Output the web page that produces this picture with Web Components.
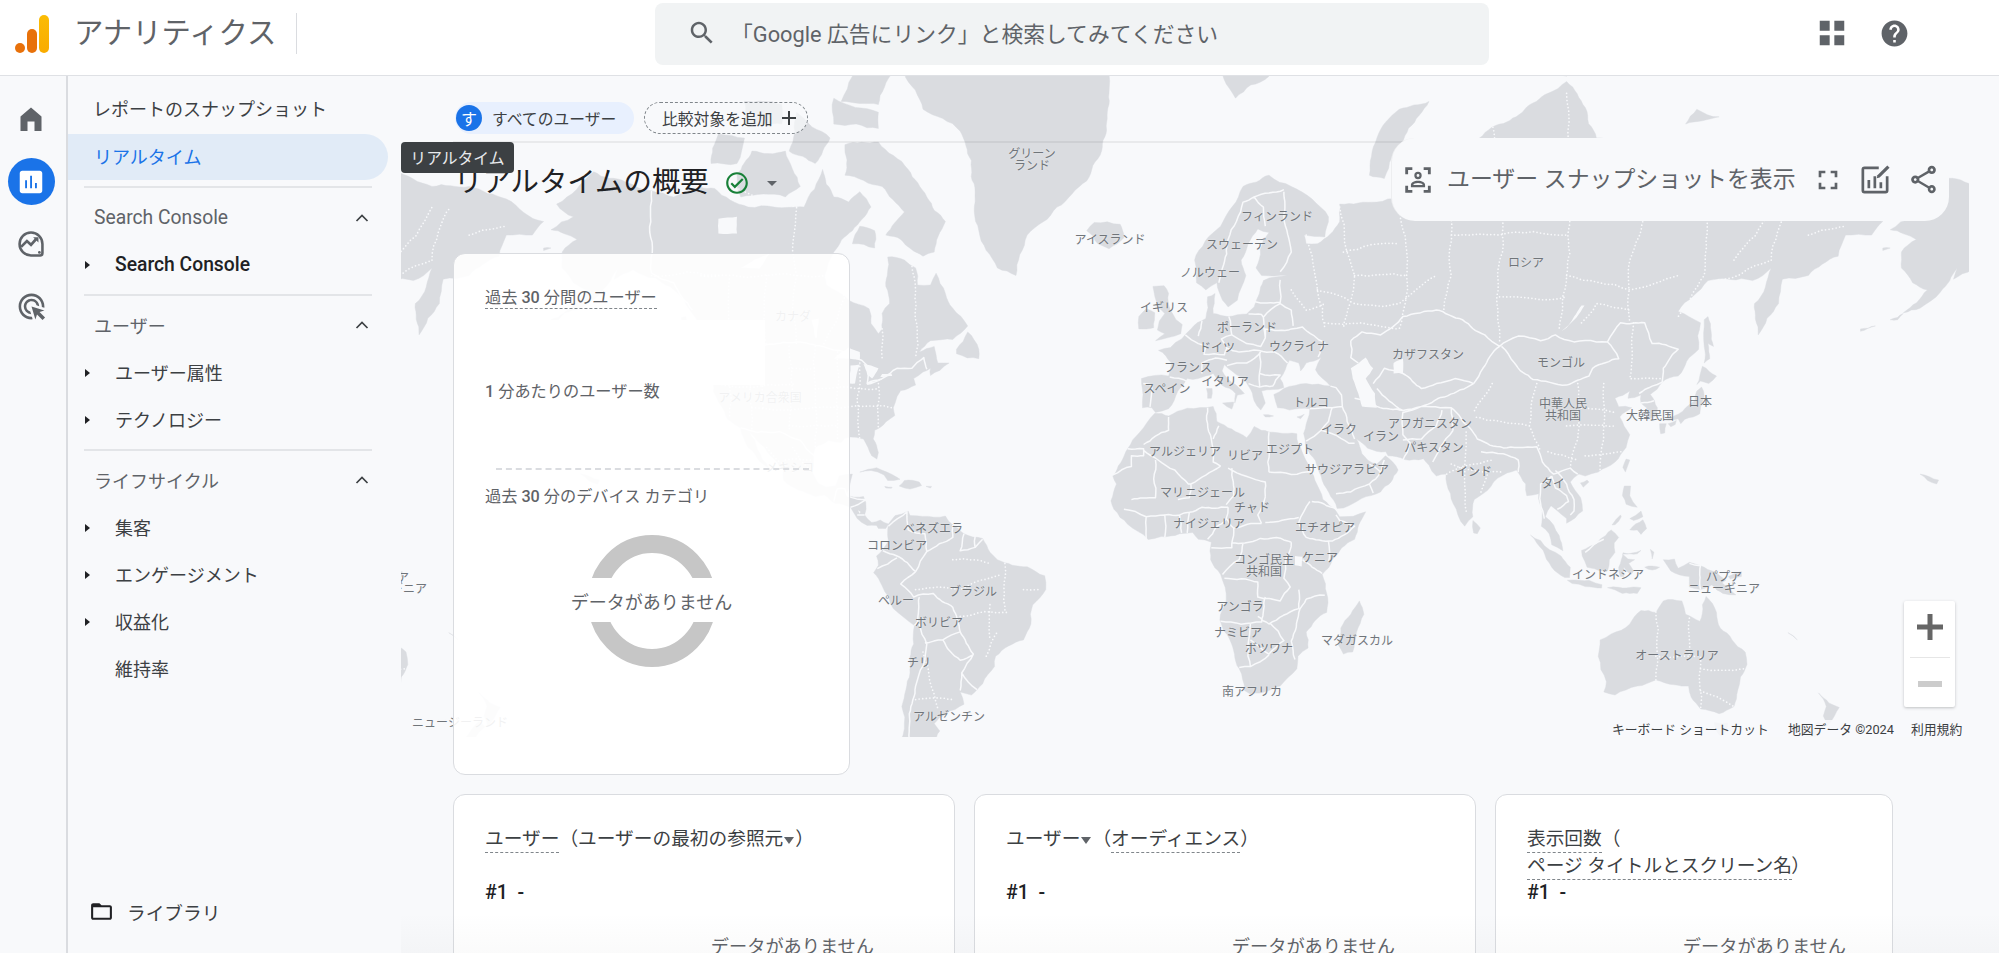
<!DOCTYPE html>
<html lang="ja"><head><meta charset="utf-8"><title>アナリティクス</title>
<style>
html,body{margin:0;height:953px;overflow:hidden;background:#f8f9fb;font-family:Roboto,"Noto Sans CJK JP",sans-serif;color:#3c4043}
</style></head><body>
<ga-app>
  <ga-header slot="header"></ga-header>
  <ga-rail slot="rail"></ga-rail>
  <ga-nav slot="nav"></ga-nav>
  <ga-main slot="main"></ga-main>
</ga-app>
<script>
const IC={
home:'<path d="M12 1.5L22.5 10.5V25H15.5V15.5H8.5V25H1.5V10.5z"/>',
report:'<path d="M19 3H5c-1.1 0-2 .9-2 2v14c0 1.1.9 2 2 2h14c1.1 0 2-.9 2-2V5c0-1.1-.9-2-2-2zM8.8 17H7.3v-6.5h1.5V17zm4 0h-1.5V7h1.5v10zm3.9 0h-1.5v-4.2h1.5V17z"/>',
ads:'<path d="M11.71 17.99A5.993 5.993 0 0 1 6 12c0-3.31 2.69-6 6-6 3.22 0 5.84 2.53 5.99 5.71l-2.1-.63A3.999 3.999 0 0 0 12 8c-2.21 0-4 1.79-4 4 0 1.89 1.31 3.47 3.08 3.89l.63 2.1zM22 12c0 .3-.01.6-.04.9l-1.97-.59c.01-.1.01-.21.01-.31 0-4.42-3.58-8-8-8s-8 3.58-8 8 3.58 8 8 8c.1 0 .21 0 .31-.01l.59 1.97c-.3.03-.6.04-.9.04-5.52 0-10-4.48-10-10S6.48 2 12 2s10 4.48 10 10zm-3.77 4.26L22 15l-10-3 3 10 1.26-3.77 4.27 4.27 1.98-1.98-4.28-4.26z"/>',
insight:'<path d="M12 2.2a9.8 9.8 0 0 1 9.8 9.8v7.8a2 2 0 0 1-2 2H12A9.8 9.8 0 0 1 12 2.2z" fill="none" stroke="currentColor" stroke-width="2.2"/><path d="M3.5 14.5l5-5 3.5 3.2 4.6-5.2" fill="none" stroke="currentColor" stroke-width="2.3"/><path d="M13.8 6.2h4.6v4.6z"/><circle cx="19.2" cy="19.2" r="1.2"/>',
search:'<path d="M15.5 14h-.79l-.28-.27C15.41 12.59 16 11.11 16 9.5 16 5.91 13.09 3 9.5 3S3 5.91 3 9.5 5.91 16 9.5 16c1.61 0 3.09-.59 4.23-1.57l.27.28v.79l5 4.99L20.49 19l-4.99-5zm-6 0C7.01 14 5 11.99 5 9.5S7.01 5 9.5 5 14 7.01 14 9.5 11.99 14 9.5 14z"/>',
apps:'<path d="M1.5 1.5h8.5V10H1.5zM14 1.5h8.5V10H14zM1.5 14h8.5v8.5H1.5zM14 14h8.5v8.5H14z"/>',
help:'<path d="M12 2C6.48 2 2 6.48 2 12s4.48 10 10 10 10-4.48 10-10S17.52 2 12 2zm1 17h-2v-2h2v2zm2.07-7.75l-.9.92C13.45 12.9 13 13.5 13 15h-2v-.5c0-1.1.45-2.1 1.17-2.83l1.24-1.26c.37-.36.59-.86.59-1.41 0-1.1-.9-2-2-2s-2 .9-2 2H8c0-2.21 1.79-4 4-4s4 1.79 4 4c0 .88-.36 1.68-.93 2.25z"/>',
share:'<path d="M18 16.08c-.76 0-1.44.3-1.96.77L8.91 12.7c.05-.23.09-.46.09-.7s-.04-.47-.09-.7l7.05-4.11c.54.5 1.25.81 2.04.81 1.66 0 3-1.34 3-3s-1.34-3-3-3-3 1.34-3 3c0 .24.04.47.09.7L8.04 9.81C7.5 9.31 6.79 9 6 9c-1.66 0-3 1.34-3 3s1.34 3 3 3c.79 0 1.5-.31 2.04-.81l7.12 4.16c-.05.21-.08.43-.08.65 0 1.61 1.31 2.92 2.92 2.92 1.61 0 2.92-1.31 2.92-2.92s-1.31-2.92-2.92-2.92zM18 4c.55 0 1 .45 1 1s-.45 1-1 1-1-.45-1-1 .45-1 1-1zM6 13c-.55 0-1-.45-1-1s.45-1 1-1 1 .45 1 1-.45 1-1 1zm12 7.02c-.55 0-1-.45-1-1s.45-1 1-1 1 .45 1 1-.45 1-1 1z"/>',
full:'<path d="M7 14H5v5h5v-2H7v-3zm-2-4h2V7h3V5H5v5zm12 7h-3v2h5v-5h-2v3zM14 5v2h3v3h2V5h-5z"/>',
check:'<path d="M12 2C6.48 2 2 6.48 2 12s4.48 10 10 10 10-4.48 10-10S17.52 2 12 2zm0 18c-4.41 0-8-3.59-8-8s3.59-8 8-8 8 3.59 8 8-3.59 8-8 8zm4.59-12.42L10 14.17l-2.59-2.58L6 13l4 4 8-8z"/>',
folder:'<path d="M20 6h-8l-2-2H4c-1.1 0-1.99.9-1.99 2L2 18c0 1.1.9 2 2 2h16c1.1 0 2-.9 2-2V8c0-1.1-.9-2-2-2zm0 12H4V8h16v10z"/>',
plus:'<path d="M19 13h-6v6h-2v-6H5v-2h6V5h2v6h6v2z"/>',
chart:'<path d="M14.5 3H5a2 2 0 0 0-2 2v14a2 2 0 0 0 2 2h14a2 2 0 0 0 2-2V9.5h-1.8V19.2H4.8V4.8h9.7z"/><path d="M7 12h1.8v5.5H7zM11 9.5h1.8v8H11zM15 13.5h1.8v4H15z"/><path d="M13.6 8.9l6.6-6.6 1.5 1.5-6.6 6.6-1.9.4z"/>',
snap:'<path d="M3 3h5v2H5v3H3zM16 3h5v5h-2V5h-3zM3 16h2v3h3v2H3zM19 16h2v5h-5v-2h3z"/><path d="M12 6.2a2.6 2.6 0 1 1 0 5.2 2.6 2.6 0 0 1 0-5.2zm0 1.6a1 1 0 1 0 0 2 1 1 0 0 0 0-2zM12 12.6c2.8 0 5 1.2 5 3v1.6H7v-1.6c0-1.8 2.2-3 5-3zm0 1.6c-1.8 0-3.2.6-3.4 1.4h6.8c-.2-.8-1.6-1.4-3.4-1.4z"/>'
};
const svg=(n,s,c='currentColor',h)=>`<svg viewBox="0 0 24 24" width="${s}" height="${h||s}" fill="${c}" aria-hidden="true">${IC[n]}</svg>`;
function def(name,css,html,setup){
  customElements.define(name,class extends HTMLElement{
    constructor(){super();const r=this.attachShadow({mode:'open'});
      const t=document.createElement('template');
      t.innerHTML=`<style>${css}</style>${typeof html==='function'?html(this):html}`;
      r.appendChild(t.content.cloneNode(true));if(setup)setup(r,this);}
  });
}
def('ga-app',`:host{display:grid;grid-template-columns:68px 333px 1fr;grid-template-rows:76px 877px;width:1999px;height:953px;overflow:hidden}
 ::slotted([slot=header]){grid-column:1/4}`,`<slot name="header"></slot><slot name="rail"></slot><slot name="nav"></slot><slot name="main"></slot>`);

def('ga-header',`:host{display:flex;align-items:flex-start;background:#fff;border-bottom:1px solid #dfe1e5;box-sizing:border-box;height:76px;padding:0 0 0 15px;position:relative}
 .logo{display:flex;align-items:flex-end;gap:2px;height:38px;margin-top:15px}
 .logo i{display:block;width:10px;border-radius:5px}
 .t{font-size:29.4px;color:#5f6368;margin-left:25px;margin-top:13px;line-height:40px;white-space:nowrap;width:222px;border-right:1px solid #dadce0;height:41px}
 .s{margin-left:358px;width:834px;height:62px;margin-top:3px;background:#f1f3f4;border-radius:8px;display:flex;align-items:center;color:#5f6368;font-size:21.8px;padding:0 0 3px 32px;box-sizing:border-box;white-space:nowrap}
 .s svg{margin-right:14px;flex:none}
 .r{display:flex;margin-left:329px;gap:33px;color:#5f6368;align-items:center;height:66px}
 .r svg{display:block}`,
 ()=>`<div class="logo"><i style="height:10px;background:#e8710a"></i><i style="height:24px;background:#e8710a"></i><i style="height:38px;background:linear-gradient(#fbbc04,#f9ab00)"></i></div>
 <div class="t">アナリティクス</div>
 <div class="s">${svg('search',30)}<span>「Google 広告にリンク」と検索してみてください</span></div>
 <div class="r">${svg('apps',28)}${svg('help',31)}</div>`);

def('ga-rail',`:host{display:flex;flex-direction:column;align-items:center;border-right:2px solid #dadce0;box-sizing:border-box;background:#f8f9fb;padding:19px 4px 0 0;color:#5f6368}
 .b{width:47px;height:47px;display:flex;align-items:center;justify-content:center;margin-bottom:16px;border-radius:50%}
 .a{background:#1a73e8;color:#fff}
 .up{transform:translateY(-1px)}`,
 ()=>`<div class="b up">${svg('home',24,'currentColor',26)}</div><div class="b a">${svg('report',30)}</div><div class="b up">${svg('insight',28)}</div><div class="b up">${svg('ads',31)}</div>`);

def('nav-row',`:host{display:flex;align-items:center;height:47px;box-sizing:border-box;padding-bottom:2px;font-size:18px;color:#3c4043;white-space:nowrap;position:relative;flex:none}
 :host([kind=top]){padding-left:25px}
 :host([kind=active]){padding-left:26px;height:46px;color:#1a73e8;background:#e1ebf7;border-radius:0 23px 23px 0;margin-right:13px;padding-bottom:3px}
 :host([kind=head]){padding-left:26px;color:#5f6368;margin-right:16px;justify-content:space-between}
 :host([kind=item]){padding-left:47px}
 :host([kind=plain]){padding-left:47px}
 :host([latin]){font-size:19.3px;padding-bottom:0}
 .car{position:absolute;left:17px;top:19.5px;width:0;height:0;border-left:5px solid #202124;border-top:4px solid transparent;border-bottom:4px solid transparent}
 .chev{margin-right:15px;display:block}`,
 h=>{const k=h.getAttribute('kind');return (k==='item'?'<i class="car"></i>':'')+'<slot></slot>'+(k==='head'?'<svg class="chev" width="16" height="10" viewBox="0 0 16 10" fill="none" stroke="#3c4043" stroke-width="1.7"><path d="M2.5 8L8 2.5 13.5 8"/></svg>':'')});

def('ga-nav',`:host{display:flex;flex-direction:column;box-sizing:border-box;background:#f8f9fb;padding:9px 0 17px 0;height:877px;overflow:hidden}
 hr{border:0;height:2px;background:#e3e5e8;margin:6px 16px 6px 16px;flex:none;width:288px}
 .a{margin-top:2px}
 .lib{margin-top:auto;display:flex;align-items:center;height:47px;padding:0 0 2px 21px;box-sizing:border-box;font-size:18.7px;gap:13px;color:#3c4043}
 .lib svg{color:#202124;display:block}`,
 ()=>`<nav-row kind="top">レポートのスナップショット</nav-row>
 <nav-row kind="active" class="a">リアルタイム</nav-row><hr>
 <nav-row kind="head" latin>Search Console</nav-row><nav-row kind="item" latin style="font-weight:500;color:#202124">Search Console</nav-row><hr>
 <nav-row kind="head">ユーザー</nav-row><nav-row kind="item">ユーザー属性</nav-row><nav-row kind="item">テクノロジー</nav-row><hr>
 <nav-row kind="head">ライフサイクル</nav-row><nav-row kind="item">集客</nav-row><nav-row kind="item">エンゲージメント</nav-row><nav-row kind="item">収益化</nav-row><nav-row kind="plain">維持率</nav-row>
 <div class="lib">${svg('folder',25)}<span>ライブラリ</span></div>`);

/* ---------- map: land and borders given in lon/lat, projected (Mercator) ---------- */
const LAND=[
[[-168,65.6],[-162,67],[-166.5,68.3],[-156.5,71.3],[-148,70.4],[-141,69.6],[-135,69],[-128,70],[-124,69.8],[-115,68],[-108,68],[-100,68],[-95,71.5],[-92,69],[-88,68.5],[-85,69.5],[-82,68],[-87,65.5],[-92,63],[-94.5,60],[-94,58.7],[-88,56.5],[-82.5,55.2],[-82,52.9],[-80,51.2],[-79,52],[-79,54.5],[-77,56],[-78,58.5],[-77.5,62.4],[-73,62],[-70,61],[-69.5,58.7],[-66,58.7],[-64.5,60.3],[-62,57.5],[-60,55.3],[-56,52.5],[-60,50.2],[-66,50],[-69,48],[-65,49],[-64.5,47.5],[-64,46],[-61,46],[-63.5,44.6],[-66,43.6],[-66,45],[-68,44.3],[-70.5,43],[-70,41.7],[-74,40.6],[-75.5,38],[-76,37],[-75.6,35.3],[-78,33.9],[-81,32],[-81.4,30],[-80,26.8],[-80.4,25.2],[-81.8,26],[-82.8,28],[-84,30],[-86,30.4],[-89,30.2],[-90,29.2],[-93.5,29.7],[-97,28],[-97.5,25],[-97.8,22.3],[-96,19],[-94,18.2],[-91.5,18.5],[-90.5,21],[-87,21.5],[-87.8,18.3],[-88.7,15.9],[-84,15.8],[-83.3,12.5],[-83.7,11],[-81.8,9],[-79.5,9.6],[-77.3,8.6],[-78,7.4],[-80,7.4],[-80.5,8.2],[-83,8.2],[-85.7,10],[-87.5,13],[-91.5,14],[-94.5,16.2],[-97,15.8],[-101.5,17.5],[-105.5,20],[-105.5,22.5],[-109,26],[-112.5,29.5],[-114.7,31.7],[-112.5,27.5],[-109.5,23],[-112,24.7],[-115,28],[-117,32.5],[-120.5,34.5],[-122.5,37.7],[-124.3,40.4],[-124,46],[-123,48.2],[-127.5,51],[-130,54.5],[-133,57],[-136,58.5],[-140,59.7],[-146,60.8],[-151,59.5],[-150,61],[-152,59.3],[-154.5,57.7],[-160,55.3],[-164.5,54.6],[-158,58],[-162,59],[-165,61],[-165,63],[-161,64.5]],
[[-80,73.7],[-72,71.5],[-67,69],[-62,66.5],[-65,63],[-68,62.5],[-74,64.5],[-78,65],[-73,67.5],[-79,70],[-89,71],[-89,73.5]],
[[-90,76.5],[-80,76.3],[-76,78.3],[-68,80.5],[-62,82.5],[-75,83],[-90,81.5],[-87,78]],
[[-117,69],[-105,69],[-101,70],[-105,73],[-114,73],[-118,71]],[[-125,72],[-118,72],[-116,74],[-123,74.3]],[[-92,75],[-80,74.7],[-80,75.8],[-92,76.7]],[[-116,75],[-106,75],[-106,76.3],[-116,76.5]],[[-104,73],[-97,72],[-93,74],[-102,75.8]],[[-87,64],[-81,63.5],[-81,65.5],[-85,66]],
[[-59,47.7],[-53,46.8],[-53,48.5],[-56,51.5],[-59,48.5]],[[-128,50.8],[-123.5,48.4],[-125,49],[-127,50]],[[-133,53.8],[-131.5,52],[-131.8,54]],
[[-73,78.2],[-66,81],[-50,82.5],[-32,83.5],[-20,81.8],[-18,77],[-20,73],[-24,70.5],[-32,68],[-40,65],[-43,60],[-48,61],[-53,65.5],[-54,69.5],[-58,74.5],[-68,76]],
[[-77.3,8.6],[-75.5,10.8],[-72,12],[-71.5,10.8],[-68,10.6],[-62,10.7],[-60,8.3],[-57,6],[-52,4.7],[-50,1],[-48,-1],[-44,-2.5],[-40,-2.9],[-35.3,-5.3],[-35,-9],[-38.5,-13],[-39,-18],[-41,-22],[-45,-23.5],[-48.5,-26],[-48.8,-28.5],[-52,-32.5],[-55,-35],[-58,-34.3],[-57,-37],[-62,-39],[-65,-41],[-63.5,-42.5],[-65.5,-45],[-67.5,-46.5],[-65.5,-48],[-69,-51],[-68.5,-53],[-66,-55],[-70,-55.5],[-75,-52],[-75,-47],[-73,-42],[-73.7,-37.5],[-71.5,-30],[-70.5,-23],[-70.3,-18.4],[-76,-14],[-79,-8],[-81.3,-4.5],[-80,-2.5],[-80.5,0],[-78.8,1.8],[-77.3,4],[-77.5,7]],
[[-9,38.7],[-9.3,43],[-2,43.5],[-1.2,46],[-4.7,48.3],[-1.5,48.8],[1.5,50.3],[4,52],[8,53.7],[8.5,57],[10.5,57.5],[10,54.5],[14,54],[19,54.4],[21,55.5],[23.5,59.3],[30,60],[23,60],[21.5,61],[25,65.3],[22,65.7],[17.5,62],[18.8,60],[16.5,56.5],[14,55.5],[12.5,56.5],[11,59],[8,58],[5.5,59],[5,62],[12,66],[18,70],[25,71],[31,70],[41,67],[40,64.8],[34.5,65],[35,64],[38,64],[44,66.5],[44,68.3],[54,68.5],[60,68.8],[68,68.5],[67,72],[72.5,73],[73,68],[75,72.5],[80,73.5],[87,75],[100,77],[105,77.7],[113,74],[128,73],[130,71],[140,72.5],[150,71.5],[160,70],[170,70],[180,68.8],[190,66.5],[187,65],[180,65],[178,62.5],[170,60],[163,59.5],[162,56],[156.5,51],[155.5,56],[160,61],[155,59.3],[143,59.3],[135,54.8],[141,53],[140.5,48.5],[135,43.5],[130.7,42.3],[127.5,39.8],[129.4,37],[129,35.2],[126.5,34.5],[126.5,37],[125,38],[125,39.7],[121.5,39],[122,40.5],[118,39],[119,37.2],[122.5,37],[119.3,35],[122,31],[121,28],[118,24.5],[113.5,22],[110,21],[108.3,21.5],[106,19.5],[108.8,15.5],[109.3,12],[105,8.8],[105,10],[102,12.5],[100.8,13.4],[99.3,10.5],[103,5.5],[104,1.4],[101,3],[100.3,6],[98.2,8],[98.5,12],[97.5,16.5],[94.3,16],[94,19],[91.5,22.5],[89,21.8],[86.5,20.5],[82.5,16.5],[80.2,15],[79.8,10.5],[77.6,8],[74.5,14],[72.8,19],[72.6,21.5],[70,21],[68,23.7],[66.5,25.3],[61.5,25.1],[57,26],[56.4,27],[51.5,27.8],[48.5,30],[50,26.5],[51.5,25],[54,24],[56.3,26],[59.7,22.5],[55,17],[45,12.8],[43.3,12.7],[39,21],[35,28],[34.3,31.3],[35.8,35.5],[36,36.8],[30.5,36.5],[27.3,37],[26.3,39.8],[29,41],[35,42],[41.5,41.5],[37.5,44.7],[39,47],[35,46],[33.5,44.5],[33,46],[30.5,46.5],[28,43],[29,41.2],[26,40.8],[23,40.5],[24,38],[22.8,36.5],[21,38.5],[19.5,41.5],[15,44.5],[13,45.7],[12.4,44.5],[16,41.8],[18.4,40],[16.5,39.7],[15.8,38],[16,40],[12.3,41.7],[10,44],[6,43],[3,43],[0.5,40.5],[-0.5,38.5],[-2,36.8],[-5.5,36],[-6.5,37],[-9,37]],
[[-5.7,35.8],[-2,35.2],[3,36.9],[10,37.3],[11,34],[15,32.3],[19,30.3],[21,32.9],[25,31.6],[30,31.3],[32.5,31.2],[32.5,30],[33.5,28],[35.5,24],[37.3,20],[39.5,15],[43,12],[44,10.5],[51,11.8],[48,4.5],[42,-1],[39.3,-5],[40.5,-10],[40.5,-15],[35,-20],[35.5,-24],[32.8,-26],[32.5,-29],[28,-33],[25,-34],[20,-34.8],[18.4,-34],[17,-29],[14.5,-22],[11.8,-17],[13.5,-12],[12,-5],[9.3,-1],[9.5,3.7],[6,4.5],[4.5,6.3],[1,6],[-4,5.2],[-7.5,4.4],[-13,8.5],[-16.7,12.5],[-17.5,14.7],[-16,19],[-17,21],[-13,27.7],[-9.8,31.5]],
[[114,-22],[113.5,-26],[115.7,-32],[115,-34.3],[118,-35],[124,-33],[129,-31.6],[134,-32.7],[137.8,-33],[138.5,-35.5],[141,-38],[146,-39],[150,-37.5],[151,-34],[153.5,-28],[153,-25],[149.5,-22],[146.3,-19],[145.3,-15],[142.5,-10.8],[141.5,-13],[140.8,-17.3],[137,-15.5],[136,-12],[131,-12],[129,-15],[125,-14.5],[122,-18],[117,-20.5]],
[[144.7,-40.8],[148.3,-40.9],[148,-42.5],[146.5,-43.6],[145.3,-42.5]],
[[172.7,-34.5],[175.5,-36.7],[178.3,-37.7],[177,-39.5],[175,-41.6],[174,-39.5],[174.8,-37.5]],[[172.7,-40.6],[174.2,-41.7],[171.2,-44.3],[170.8,-45.9],[168,-46.6],[166.5,-45.8],[170,-43]],
[[-5.5,50],[1.3,51.2],[1.7,52.7],[0,53.5],[-1.5,55],[-2,57.5],[-3.2,58.6],[-6.2,58.5],[-5,55.5],[-3,54.5],[-4.5,53.3],[-5,51.8],[-3,51.2]],[[-10,52],[-6,52.2],[-5.7,54.6],[-8,55.2],[-10,54]],
[[-24,65.5],[-21,64],[-18,63.4],[-14,64.7],[-15,66.2],[-22,66.4]],[[11,79],[16,76.7],[25,78],[27,80],[17,80.2]],[[52,71],[56,70.7],[58,72.5],[68,76.5],[60,76],[54,74]],[[95,79],[105,78],[100,81]],[[137,75],[146,75.5],[140,76]],
[[142,46],[143.5,46.8],[143,49.5],[144.5,49],[143,54],[142,53.5],[142,49]],
[[131,34.3],[135,35.6],[137,37],[139.5,38.5],[140,40.5],[141.3,41.3],[142,39.5],[141,37],[140.8,35.7],[139,35],[136.8,34.5],[135.7,33.5],[135,34.6],[132.5,34.2]],[[140,41.8],[141.5,45.4],[145.3,43.5],[143.2,42],[141,42.5]],[[130,33.5],[131.8,33.5],[131.4,31.4],[130.3,31.2]],[[132.3,33.5],[134.5,34.2],[134.2,33.3],[133,32.8]],
[[121,25.2],[122,25],[120.8,22],[120.1,23.2]],[[108.7,19.3],[110.5,20],[111,19.5],[109.5,18.2]],
[[120.5,18.5],[122.2,18.5],[122,16],[124,13],[121,13.8],[120,16]],[[122,7],[125.5,9.7],[126.5,7.3],[125,5.8],[124,7]],[[122,10],[125,12],[125.5,10.5],[123,9.5]],[[117.2,8.3],[119.5,11],[119.7,10.5],[118,8.4]],
[[95.3,5.6],[98,4.2],[103.5,0],[106,-3],[105.8,-5.8],[104.5,-5.8],[101,-3],[98.7,1.5]],[[105.2,-6.5],[108.5,-6.5],[111,-6.5],[114.5,-7.7],[114.4,-8.6],[110,-8.2],[106.5,-7.4]],
[[109,1.5],[111.3,2.6],[113,3.3],[115.5,5.5],[117,7],[119,5],[117.8,3.5],[118,1],[116.5,-1],[116,-4],[114.5,-4],[110.5,-3],[109.2,0]],
[[119.5,-5.5],[120.4,-5.5],[120.4,-3],[122.3,-5],[123,-4],[121.7,-2],[123.3,-1],[121.5,-.8],[120,0.5],[125,1.5],[124,.6],[120.2,0.9],[119.7,-1],[119,-3]],
[[131,-1],[134,-.8],[135,-3.3],[138,-1.7],[141,-2.6],[145,-4.3],[147.8,-6.5],[146.8,-7.2],[150.5,-10.4],[147,-10],[144,-7.8],[141,-9],[138,-8.3],[138,-5.5],[133,-4],[132,-2.5]],
[[116,-8.5],[119,-8.4],[123,-8.3],[125,-8.5],[124,-10],[120,-10]],[[148.5,-5.5],[152,-4.2],[152,-5.5],[149,-6.2]],[[127.5,1.8],[128.5,1],[128,-.8]],[[126,-3],[130,-3],[128,-3.8]],
[[79.8,9.5],[81.8,7.5],[81,6],[80,6.2]],[[49.3,-12],[50.5,-15.5],[47.5,-25],[45,-25.5],[43.5,-23],[44.3,-19],[47,-15.5]],
[[-85,22],[-80.5,23.1],[-75,20.7],[-74.2,20.2],[-77.5,19.9],[-78.5,21.3],[-82,22.4]],[[-74.4,18.5],[-73,19.9],[-69,19.5],[-68.4,18.6],[-71.5,17.7]],[[-78.3,18.4],[-76.3,18.2],[-76.5,17.9],[-78,18]],[[-67.2,18.4],[-65.7,18.4],[-66,18]],
[[12.5,38],[15.5,38.2],[15,36.7]],[[8.2,41],[9.7,41],[9.5,39],[8.5,39]],[[23.5,35.5],[26.2,35.2],[24,35]],[[32.5,35],[34.5,35.6],[33.5,34.6]],[[166,-21],[167,-22],[164.5,-20.2]],[[-160,21.5],[-155,20],[-155.5,19]],
[[-176,52],[-172,52.5],[-176,51.6]],[[-168,53.5],[-164.5,54.5],[-166,53.5]],[[-170,63.5],[-168,63.5],[-170,63.2]]
];
const HOLES=[
[[47,45],[51,47],[53,45],[51,43],[53.5,40],[54,37],[50,37.3],[49,40],[47.5,43]],[[58.5,46],[61,46.8],[61,44],[58.5,44]],
[[-92,46.8],[-85,46.7],[-85,48],[-88,48.8]],[[-87.7,42],[-86.3,42],[-85,45.7],[-87.5,45.5]],[[-84,45.8],[-80,45],[-81.7,43],[-83,43.8]],[[-83,41.7],[-79,42.8],[-79,43],[-83,42.2]],[[-79.5,43.3],[-76.3,43.5],[-76.5,44],[-79,43.9]],
[[-123,66.8],[-118,67],[-118,65.2],[-123,65.2]],[[-117,61],[-109,62.9],[-112,60.9]],[[-98,53.5],[-96,53.7],[-96.5,50.5],[-97,50.5]],[[32,0],[34,-.2],[33.8,-2.8],[32,-2.5]],
[[103.6,51.6],[105,52.2],[109.8,55.7],[109,55.7],[106,53]],[[-85.5,12.2],[-84.8,11.8],[-85,11.3]]
];
const SOLID=[
[[47,50],[50,51.5],[55,51],[61,54],[70,55],[77,53.5],[83,51],[87,49]],[[87,49],[92,50.8],[98,50],[102,51],[107,49.8],[113,49.8],[116,49.8],[119.5,53],[126,53],[128,49.5],[135,48.5],[131,45],[130.7,42.3]],[[87.5,49],[91,46],[96,42.8],[105,41.7],[111,43.5],[112,45],[119,46.8],[116,49.8]],[[87,49],[82.5,45],[80,42]],[[53,42],[56,45],[61,44],[66,41],[70,42],[75,43],[80,42]],[[47,50],[47,47],[49,46]],
[[74,37],[79,32.5],[81,30],[88,27.9],[92,28],[97,28.2],[98.5,24.5],[101.5,21.5],[106,23],[108,21.5]],[[74.5,32],[71,28],[69,24.5]],[[61,25],[63,29],[61,31],[61,36],[66,37.3],[71,37],[74,37],[74.5,32]],[[61,29.8],[66,30],[70,33],[71.5,36.5]],[[48,30],[46,34],[44.7,37.3],[44.5,39.7],[43,41.2],[41.5,41.5]],[[36,36.8],[42,37],[44.7,37.3]],[[48,39],[54,37.3],[61,36.4]],[[54,41],[61,36.4],[66,37.3],[73,39.5],[80,42]],[[35,29.5],[39,32],[42,31.2],[46.5,29],[48,29]],[[42,37],[41,34],[39,32]],[[43,16.5],[47,17],[52,19],[55,22],[52,24]],[[56,25],[55,22]],[[52,19],[53,16.7]],[[88,26.5],[92,25],[92,22]],[[82,27],[88,26.5]],
[[101,21],[98,19],[98,14],[99,10]],[[101,21],[102,18],[105,16],[105.5,14.5],[102.5,12.5]],[[102,22.4],[105,19],[107,15],[107,12],[106,11]],[[124.5,40],[128,41.5],[130.7,42.3]],[[125,38],[128.5,38.5]],
[[-1.7,43.3],[3,42.4]],[[-8.8,42],[-6.5,41.7],[-7,37.2]],[[2.5,51],[6,49.5],[8,49],[7.5,47.5]],[[7,44],[7,46],[10.5,46.9],[13.7,46.5]],[[7,53.3],[6,50.8]],[[14.2,54],[15,51],[12.2,50.3],[13.7,48.7],[13,47.5],[7.5,47.6]],[[15,51],[19,49.5],[22.8,49],[24,50.5],[23.5,53.9],[23,54.3],[19.5,54.4]],[[24,50.5],[24,52],[31,52],[34,52.3],[40,49.6],[38.2,47.1]],[[22.3,48.3],[26.5,48],[30,46]],[[13.7,45.5],[19,46],[22.8,48]],[[22.5,48],[22.5,44.3],[22.5,41.3],[19.5,42]],[[22.5,41.3],[26,41.5],[28,43.7],[22.5,44]],[[13.7,48.7],[17,48],[22.3,48.3]],[[23.5,53.9],[28,56],[31,55],[31.5,52.5]],[[21,56.3],[28,56.2],[28,59.4]],[[28,60.5],[31,63],[29,67],[29,69.5]],[[11.5,59],[12.5,61],[14,64.5],[18,68.5],[21,69]],[[24,66],[23.5,68],[21,69],[29,69.7]],
[[-2,35],[-2,32],[-8.7,28.7]],[[-13,27.7],[-8.7,27.7],[-8.7,26],[-12,26],[-12,23.4],[-17,21.3]],[[-8.7,27.3],[-4.8,25],[3.3,19],[4,19],[12,23.5]],[[8.5,37],[9.5,30],[10,24.5],[12,23.5]],[[11.5,33],[10,30]],[[25,31.6],[25,22]],[[25,22],[37,22]],[[14,23],[24,19.5],[24,15.7]],[[15,23],[15.5,16],[13.5,13.7]],[[-12,15],[-5.5,15.5],[-5.5,25]],[[4,19],[3.6,15.5],[.5,15]],[[3.6,11.7],[7,13],[14,13]],[[8.5,4.5],[13.5,10],[14,13]],[[24,15.7],[22,11],[23,8.7]],[[15,3.5],[18.5,3.5],[27,5],[31,3.7]],[[24,9],[33,10.3]],[[36,14.5],[33,9],[35,5],[42,4],[48,8],[44,9.5],[43,11]],[[36.5,14.5],[43,12.7]],[[41,-1.7],[41,3.9]],[[34,-1],[39.3,-4.7]],[[31,3.7],[29.5,-1],[29,-6],[30.7,-8.3],[28,-12],[22,-11],[22,-7],[13,-6]],[[12.5,-5],[17,-1],[18,3.5]],[[12,-17.3],[23,-17.5],[24,-11]],[[22,-16],[25,-18],[33,-14],[33,-9]],[[20,-18],[20,-28.5],[17,-28.7]],[[20,-22],[25,-25.5],[29,-22.2],[25.3,-17.8]],[[35,-11.5],[40,-10.5]],[[35,-11.5],[33,-15],[31,-22.3],[32,-26.8]],[[20,-28.5],[25,-25.7]],[[-14,12.5],[-8,10.5],[-8,4.5]],[[-3,5],[-3,11],[1,11],[1.5,6.2]],[[-8,10.5],[-3,11]],[[1,11],[3.6,11.7],[3,6.2]],[[9.5,2.2],[15,2.2],[15,3.5]],[[13.5,10],[15.5,7.5],[15,3.5]],[[15.5,7.5],[23,8.7]],
[[-123,49],[-95,49],[-89,48],[-84.5,46.5],[-82.5,45],[-83,42],[-79,43],[-75,45],[-71,45],[-67.8,47],[-67,44.8]],[[-141,69.6],[-141,60.3],[-135,59],[-130,55]],[[-117,32.5],[-108,31.5],[-106.5,31.7],[-101,29.7],[-97.2,26]],[[-92,14.5],[-91,17.8],[-89,17.8],[-88.3,15.9]],[[-88.3,15.9],[-83.3,15]],[[-87.5,13],[-83.3,15]],[[-85.7,11],[-83.7,11]],
[[-77.3,8],[-72.3,11.8],[-72,7],[-67.5,6],[-67,1.2],[-70,-4.2],[-75,0],[-78.8,1.4]],[[-67,1.2],[-60,5],[-60,8.3]],[[-57,6],[-58,1.4],[-54,2.3],[-54,5.8]],[[-54,2.3],[-52,4.5]],[[-70,-4.2],[-74,-7.5],[-70.5,-11],[-65.3,-10],[-60,-13.7],[-58,-20],[-54.5,-25.5],[-57.6,-30],[-53.5,-33.8]],[[-80.3,-3.4],[-75,-.5]],[[-69,-11],[-69.5,-17.5],[-70.3,-18.4]],[[-69,-18],[-67,-23],[-70,-33],[-71.7,-39],[-72,-50],[-69,-52]],[[-67.5,-22.8],[-62.7,-22],[-58,-20]],[[-62.7,-22],[-58,-27],[-54.6,-25.7]],[[-58,-34],[-57.6,-30]],[[138,-2],[141,-2.6],[141,-9]],[[115,4.5],[110,1]]
];
const DOT=[
[[60,69],[62,60],[60,52]],[[75,72],[74,60],[72,55]],[[87,50],[87,62],[85,75]],[[105,77],[107,70],[105,60],[103,52]],[[130,72],[122,62],[122,53]],[[160,62],[165,68]],[[44,68],[48,60],[45,52]],[[35,65],[38,58],[40,52]],[[140,72],[142,60],[135,54]],[[150,62],[160,68]],[[48,60],[62,60]],[[38,58],[48,56],[60,56],[70,60]],[[40,53],[50,53],[60,52]],[[31,58],[35,55],[40,56]],[[45,63],[60,64]],[[74,65],[87,65],[105,65]],[[87,57],[105,57]],[[105,60],[122,58],[135,60]],[[109,53],[113,56],[122,55]],[[143,59],[160,62]],[[170,65],[180,66]],
[[97,42],[95,33],[98,27]],[[108,42],[108,30],[106,23]],[[115,42],[115,30],[114,22]],[[85,42],[80,36]],[[105,33],[118,33]],[[110,26],[120,27]],[[123,53],[122,43],[131,43]],[[95,33],[80,35]],[[108,37],[118,36]],[[100,27],[108,25]],
[[-141,60],[-102,60]],[[-120,60],[-120,49]],[[-110,60],[-110,49]],[[-102,60],[-102,49]],[[-95,60],[-89,57],[-95,49]],[[-79,52],[-79,47]],[[-120,60],[-128,60]],[[-102,60],[-102,68]],[[-71,63],[-70,47]],[[-102,68],[-120,70]],[[-94,60],[-102,60]],
[[-114,49],[-114,37],[-114,32]],[[-104,49],[-104,32]],[[-111,45],[-111,37]],[[-97,49],[-97,37],[-97,28]],[[-120,42],[-120,35]],[[-124,42],[-102,42]],[[-114,37],[-90,37],[-75,37]],[[-91,48],[-91,30]],[[-85,46],[-85,30]],[[-80,42],[-80,32]],[[-104,45],[-97,45]],[[-104,33],[-91,33]],[[-97,41],[-80,41]],
[[-110,28],[-103,22]],[[-103,28],[-98,22]],[[-105,25],[-98,25]],
[[-70,-9],[-58,-9],[-47,-5]],[[-50,-13],[-50,-22]],[[-58,-16],[-45,-15]],[[-46,-2],[-46,-15]],[[-41,-9],[-37,-9]],[[-51,-26],[-48,-20]],[[-60,-1],[-50,-2]],[[-68,-25],[-64,-38]],[[-70,-36],[-60,-36]],
[[72,21],[85,25]],[[78,12],[78,32]],[[82,17],[84,23]],[[74,24],[88,22]],
[[129,-14.9],[129,-31.6]],[[138,-16.5],[138,-26],[141,-26],[141,-38]],[[129,-26],[138,-26]],[[141,-29],[153,-29]],[[141,-34],[150,-37.5]]
];
const LABELS=[
["グリーン",1032,154],["ランド",1032,166],["アイスランド",1110,240],["フィンランド",1277,217],["スウェーデン",1242,245],["ノルウェー",1210,273],["イギリス",1164,308],["ポーランド",1247,328],["ドイツ",1217,348],["ウクライナ",1299,347],["フランス",1188,368],["イタリア",1225,382],["スペイン",1167,389],["トルコ",1311,403],["カザフスタン",1428,355],["ロシア",1526,263],["モンゴル",1561,363],["中華人民",1563,404],["共和国",1563,416],["大韓民国",1650,416],["日本",1700,402],["タイ",1553,484],["イラク",1339,430],["イラン",1381,437],["アフガニスタン",1430,424],["パキスタン",1434,448],["アルジェリア",1185,452],["リビア",1245,456],["エジプト",1290,450],["サウジアラビア",1347,470],["インド",1474,472],["マリ",1172,493],["ニジェール",1215,493],["チャド",1252,508],["ナイジェリア",1209,524],["エチオピア",1325,528],["ベネズエラ",933,529],["コロンビア",897,546],["コンゴ民主",1264,560],["共和国",1264,572],["ケニア",1320,558],["インドネシア",1608,575],["パプア",1724,577],["ニューギニア",1724,589],["ブラジル",973,592],["ペルー",896,601],["ボリビア",939,623],["アンゴラ",1240,607],["ナミビア",1238,633],["ボツワナ",1269,649],["マダガスカル",1357,641],["オーストラリア",1677,656],["チリ",919,663],["南アフリカ",1252,692],["アルゼンチン",949,717],["パプア",391,578],["ニューギニア",391,589],["ニュージーランド",460,723],["カナダ",793,317],["アメリカ合衆国",760,398],["メキシコ",790,468]
];
const MX=1176,KX=3.72,KY=213,EQ=556;
const X=lo=>MX+lo*KX, Y=la=>EQ-KY*Math.log(Math.tan(Math.PI/4+la*Math.PI/360));
/* deterministic midpoint displacement so coasts and borders read as organic lines */
let seed=12345;const rnd=()=>{seed=(seed*16807)%2147483647;return seed/2147483647-.5;};
function rough(a,b,amp,min,out){
  const dx=b[0]-a[0],dy=b[1]-a[1],len=Math.hypot(dx,dy);
  if(len<min){out.push(b);return;}
  const k=rnd()*amp,m=[(a[0]+b[0])/2-dy*k,(a[1]+b[1])/2+dx*k];
  rough(a,m,amp,min,out);rough(m,b,amp,min,out);
}
function project(list,closed,amp,min){
  return list.map(l=>{
    const pts=l.map(p=>[X(p[0]),Y(p[1])]);
    if(closed)pts.push(pts[0]);
    const out=[pts[0]];
    for(let i=1;i<pts.length;i++)rough(pts[i-1],pts[i],amp,min,out);
    return out;
  });
}
const toD=(polys,off,closed)=>polys.map(l=>'M'+l.map(p=>(p[0]+off).toFixed(1)+' '+p[1].toFixed(1)).join('L')+(closed?'Z':'')).join('');
const WR=360*KX;
const triple=(polys,closed)=>[-WR,0,WR].map(o=>toD(polys,o,closed)).join('');
def('ga-map',`:host{position:absolute;left:0;top:0;width:1568px;height:661px;overflow:hidden;display:block}
 .w{position:absolute;left:0;top:0}
 span{position:absolute;transform:translate(-50%,-50%);font-size:12px;line-height:12px;color:#70757a;white-space:nowrap;text-shadow:0 0 2px rgba(248,249,251,.7)}
 .attr{position:absolute;right:0;bottom:0;height:17px;background:rgba(248,249,251,.85);display:flex;align-items:center;font-size:12.8px;color:#3c4043;width:361px;box-sizing:border-box;padding-left:4px;white-space:nowrap}
 .attr b{font-weight:400;display:block}
 .zoom{position:absolute;left:1503px;top:525px;width:51px;height:106px;background:#fff;border-radius:2px;box-shadow:0 1px 3px rgba(60,64,67,.3);display:flex;flex-direction:column;align-items:center;box-sizing:border-box;padding-top:12px}
 .zoom i{display:block;width:40px;height:1px;background:#e6e6e6;margin:16px 0 23px}
 .zoom svg{display:block}`,
 ()=>{
  const land=triple(project(LAND,true,.16,7),true),hole=triple(project(HOLES,true,.1,5),true),so=triple(project(SOLID,false,.14,6)),dt=triple(project(DOT,false,.12,9));
  return `<svg class="w" width="1568" height="661" viewBox="401 76 1568 661">
   <path d="${land}" fill="#dadce0" stroke="#dadce0" stroke-width=".4" stroke-linejoin="round"/>
   <path d="${hole}" fill="#f8f9fb"/>
   <path d="${so}" fill="none" stroke="#f8f9fb" stroke-width="1.5" stroke-linejoin="round"/>
   <path d="${dt}" fill="none" stroke="#f8f9fb" stroke-width="1.7" stroke-dasharray="0 3.6" stroke-linecap="round"/>
  </svg>
  ${LABELS.map(l=>`<span style="left:${l[1]-401}px;top:${l[2]-76}px">${l[0]}</span>`).join('')}
  <div class="zoom"><svg width="28" height="28" viewBox="0 0 28 28" fill="#666"><path d="M11.5 1h5v10.5H27v5H16.5V27h-5V16.5H1v-5h10.5z"/></svg><i></i><svg width="24" height="7" viewBox="0 0 24 7" fill="#ccc"><rect width="24" height="6"/></svg></div>
  <div class="attr"><b style="width:176px">キーボード ショートカット</b><b style="width:123px">地図データ ©2024</b><b>利用規約</b></div>`;
 });

def('ga-chip',`:host{display:inline-flex;align-items:center;height:32px;border-radius:16px;font-size:15.8px;color:#3c4043;box-sizing:border-box;white-space:nowrap}
 :host([kind=user]){background:#e8f0fe;padding:0 17px 0 1px;gap:10px;width:179px}
 :host([kind=add]){border:1.5px dashed #80868b;padding:0 9px 0 17px;gap:4px;width:164px;background:rgba(248,249,251,.7)}
 .av{width:26px;height:26px;background:#1a73e8;color:#fff;border-radius:50%;display:flex;align-items:center;justify-content:center;font-size:16px;flex:none}
 svg{display:block;flex:none}`,
 h=>h.getAttribute('kind')==='user'?`<div class="av">す</div><slot></slot>`:`<slot></slot>${svg('plus',24,'#3c4043')}`);

def('ga-tip',`:host{position:absolute;left:0;top:66px;width:113px;height:31px;background:#3c4043;color:#e8eaed;border-radius:4px;font-size:15.8px;display:flex;align-items:center;justify-content:center;z-index:3;white-space:nowrap}`,`<slot></slot>`);

def('ga-card',`:host{display:block;background:#fff;border:1px solid #dadce0;border-radius:12px;box-sizing:border-box;padding:31px 31px 0;font-size:18.7px;color:#3c4043;position:relative;overflow:hidden}
 .no{position:absolute;top:133px;background:#fff;padding:4px 0;color:#5f6368;font-size:18.2px;white-space:nowrap}
 .rank{position:absolute;left:31px;top:86px;font-weight:500;color:#202124;font-size:19.5px;white-space:nowrap}
 .ti{line-height:26.5px;min-height:52px}`,
 h=>`<div class="ti"><slot></slot></div><div class="rank">#1&nbsp; -</div><div class="no" style="right:${h.getAttribute('nor')||32}px">データがありません</div>`);

def('dash-u',`:host{display:inline;border-bottom:1.5px dashed #80868b;padding-bottom:2px}`,`<slot></slot>`);
def('drop-tri',`:host{display:inline-block;width:0;height:0;border-left:5.5px solid transparent;border-right:5.5px solid transparent;border-top:7px solid #5f6368;margin:0 1px;vertical-align:1px}`,``);

def('ga-donut',`:host{display:block;position:relative;width:126px;height:132px;margin:0 auto}
 svg{display:block}`,
 ()=>`<svg width="126" height="132" viewBox="0 0 126 132"><ellipse cx="63" cy="66" rx="55" ry="57" fill="none" stroke="#c6c6c6" stroke-width="18"/><rect x="-4" y="43" width="134" height="44" fill="#fff"/></svg>`);

def('ga-overview',`:host{display:block;width:397px;height:522px;box-sizing:border-box;background:rgba(255,255,255,.9);border:1px solid #dadce0;border-radius:12px;padding:34px 31px 0;font-size:16.2px;color:#5f6368;position:relative}
 .u{border-bottom:1.5px dashed #80868b;color:#5f6368;display:inline-block;line-height:20px}
 b{font-weight:500}
 .m{margin-top:73px;line-height:20px}
 .d{border-bottom:2px dashed #dadce0;margin:66px 0 0 11px;width:313px;height:0}
 .c{margin-top:17px;line-height:20px}
 .don{position:relative;margin-top:28px}
 .nd{position:absolute;left:0;right:0;top:55px;text-align:center;font-size:18px;line-height:26px;color:#5f6368}
 .w{position:absolute;left:31px;top:66px;width:280px;height:65px;background:#fff}`,
 ()=>`<div class="w"></div><div style="position:relative"><span class="u">過去 <b>30</b> 分間のユーザー</span></div>
 <div class="m" style="position:relative"><b>1</b> 分あたりのユーザー数</div>
 <div class="d"></div><div class="c">過去 <b>30</b> 分のデバイス カテゴリ</div>
 <div class="don"><ga-donut></ga-donut><div class="nd">データがありません</div></div>`);

def('ga-main',`:host{display:block;position:relative;overflow:hidden;height:877px}
 :host::after{content:"";position:absolute;left:0;right:0;bottom:0;height:40px;background:linear-gradient(rgba(60,64,67,0),rgba(60,64,67,.025));pointer-events:none}
 .c{position:relative;box-sizing:border-box;padding:26px 50px 0 52px;display:flex;flex-direction:column}
 .chips{display:flex;gap:10px;padding:0 0 7px 2px;border-bottom:2px solid rgba(60,64,67,.08);height:32px}
 .title{display:flex;align-items:flex-start;justify-content:space-between;height:115px;margin-top:-5px}
 .h{display:flex;align-items:center;margin-top:27px;height:36px;padding-left:1px}
 h1{font-size:28.4px;font-weight:400;color:#202124;margin:0;line-height:36px;white-space:nowrap}
 .h svg{display:block}
 .car{width:0;height:0;border-left:5px solid transparent;border-right:5px solid transparent;border-top:5px solid #5f6368;margin-left:17px}
 .snap{width:558px;height:83px;background:#f8f9fb;border-radius:24px 0 24px 24px;box-sizing:border-box;display:flex;align-items:center;padding:0 0 0 9px;font-size:22.9px;color:#5f6368;white-space:nowrap;border-left:1px solid rgba(60,64,67,.06)}
 .snap svg{flex:none;display:block}
 .snap .tx{margin-left:12px;width:364px;padding-bottom:5px}
 .slot{display:flex;justify-content:center;flex:none}
 .grid{display:grid;grid-template-columns:502px 502px 398px;gap:19px;margin-top:19px}
 ga-card{height:200px}
 .tp{font-feature-settings:"palt"}`,
 ()=>`<ga-map></ga-map><ga-tip>リアルタイム</ga-tip>
 <div class="c">
  <div class="chips"><ga-chip kind="user">すべてのユーザー</ga-chip><ga-chip kind="add">比較対象を追加</ga-chip></div>
  <div class="title">
   <div class="h"><h1>リアルタイムの概要</h1><span style="margin-left:15px">${svg('check',26,'#188038')}</span><i class="car"></i></div>
   <div class="snap">${svg('snap',34,'#5f6368')}<span class="tx">ユーザー スナップショットを表示</span><div class="slot" style="width:34px">${svg('full',32,'#5f6368')}</div><div class="slot" style="width:60px;margin-left:0">${svg('chart',36,'#5f6368')}</div><div class="slot" style="width:36px">${svg('share',33,'#5f6368')}</div></div>
  </div>
  <ga-overview></ga-overview>
  <div class="grid">
   <ga-card nor="80"><dash-u>ユーザー</dash-u>（ユーザーの最初の参照元<drop-tri></drop-tri>）</ga-card>
   <ga-card nor="80"><span>ユーザー<drop-tri></drop-tri>（</span><dash-u>オーディエンス</dash-u>）</ga-card>
   <ga-card nor="46"><dash-u>表示回数</dash-u>（<br><dash-u>ページ タイトルとスクリーン名</dash-u><span class="tp">）</span></ga-card>
  </div>
 </div>`);
</script>
</body></html>
